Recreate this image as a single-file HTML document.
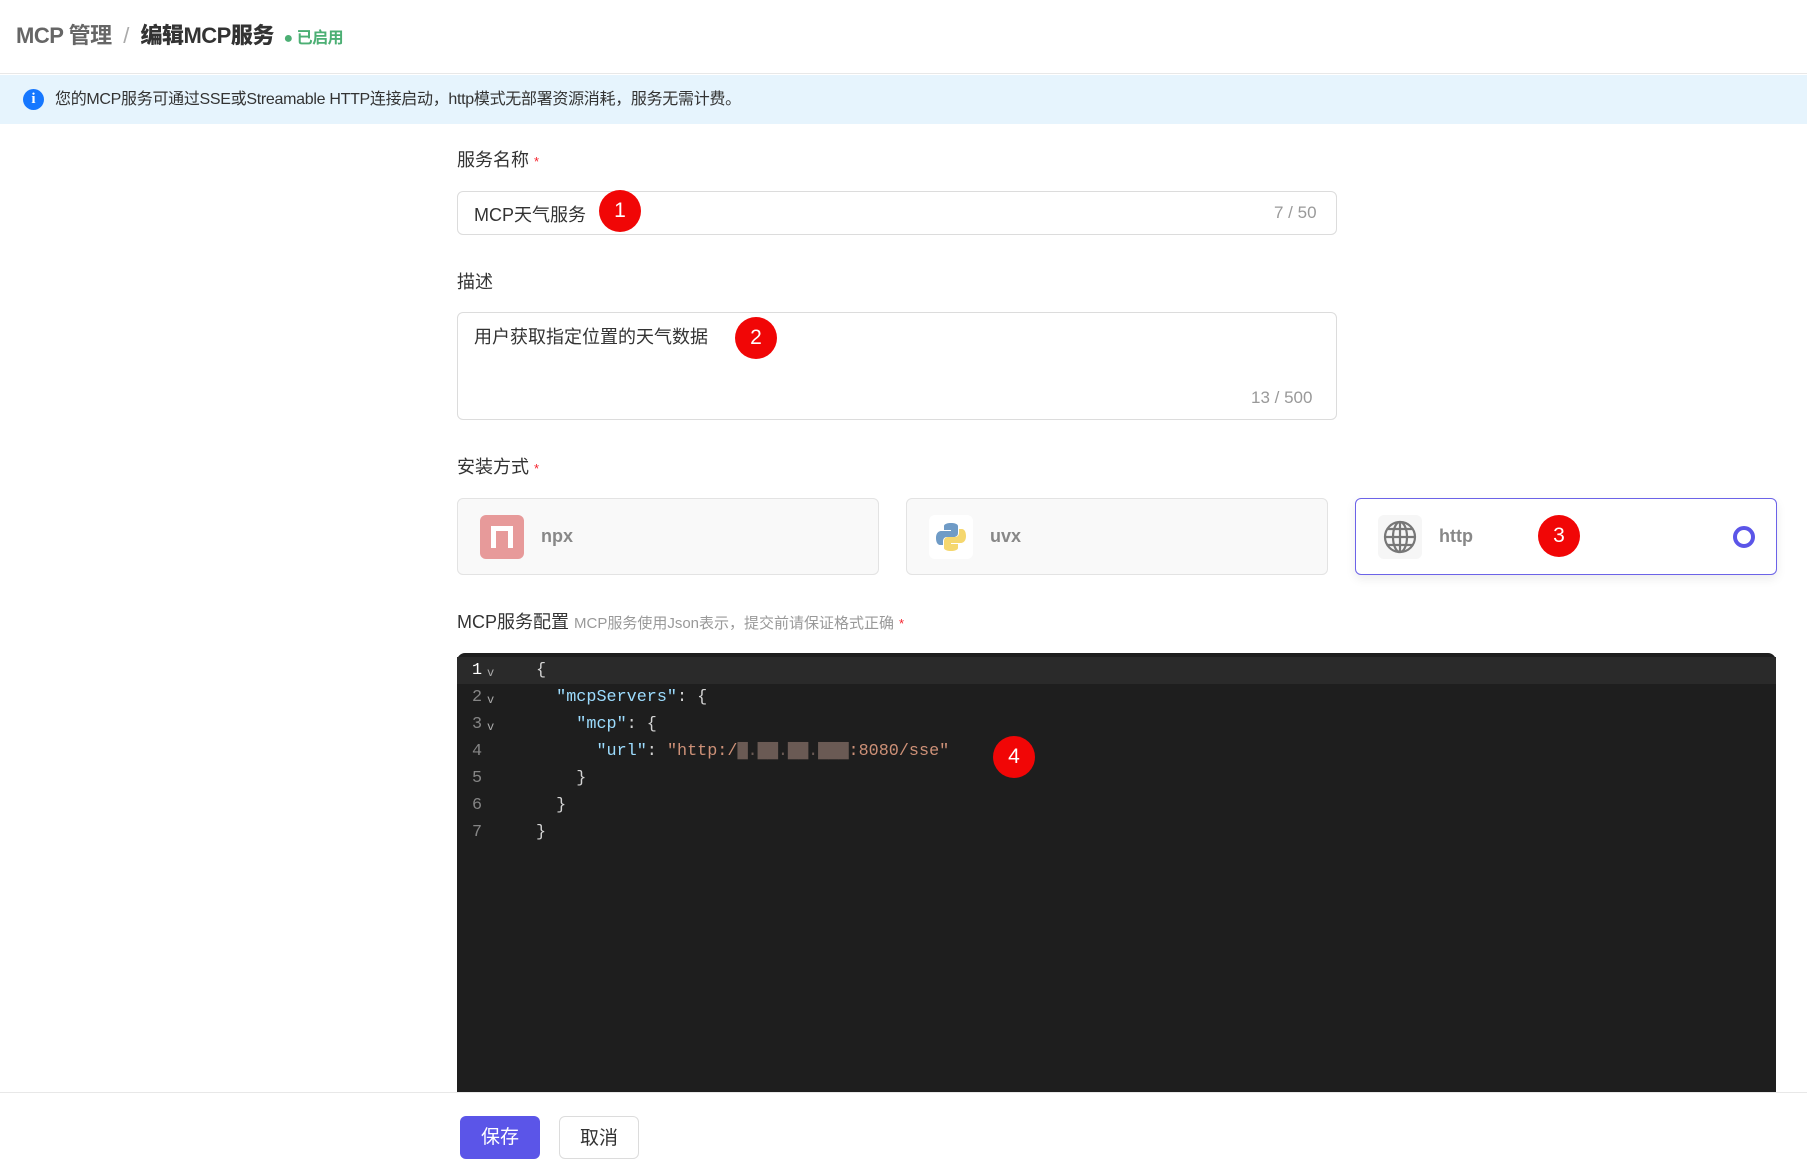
<!DOCTYPE html>
<html><head><meta charset="utf-8"><style>
*{box-sizing:border-box;margin:0;padding:0}
body{width:1807px;height:1173px;background:#fff;font-family:"Liberation Sans","Noto Sans CJK SC",sans-serif;position:relative;overflow:hidden;color:#333}
.abs{position:absolute}
.hdr{left:0;top:0;width:1807px;height:74px;border-bottom:1px solid #e8e8e8}
.title{left:16px;top:18px;font-size:22px;color:#666;font-weight:bold;white-space:nowrap;letter-spacing:-0.5px}
.title b{color:#333}
.info{left:0;top:75px;width:1807px;height:49px;background:#e6f4fd;font-size:16px;color:#333;line-height:49px;padding-left:55px;letter-spacing:-0.3px}
.ic{left:23px;top:89px;width:21px;height:21px;border-radius:50%;background:#1677ff;color:#fff;font-size:15px;font-weight:bold;text-align:center;line-height:21px;font-family:"Liberation Serif",serif}
.lbl{font-size:18px;color:#333;left:457px}
.req{color:#f5222d;font-size:13px;margin-left:5px}
.inp{border:1px solid #dcdcdc;border-radius:6px;left:457px;width:880px;background:#fff}
.cnt{color:#999;font-size:17px}
.badge{width:42px;height:42px;border-radius:50%;background:#f10606;color:#fff;font-size:21px;text-align:center;line-height:42px}
.card{top:498px;width:422px;height:77px;border:1px solid #e3e3e3;border-radius:6px;background:#f9f9f9}
.card .t{position:absolute;left:83px;top:27px;font-size:18px;color:#888;font-weight:bold}
.card .icb{position:absolute;left:22px;top:16px;width:44px;height:44px;border-radius:6px;background:#fff}
.ed{left:457px;top:653px;width:1319px;height:440px;background:#1e1e1e;border-radius:8px 8px 0 0;font-family:"Liberation Mono",monospace;font-size:16.8px}
.ln{position:absolute;left:0;width:1319px;height:27px;line-height:27px;color:#d4d4d4;white-space:pre}
.ln .n{position:absolute;left:15px;color:#858585}
.ln .f{position:absolute;left:30px;top:3px;font-size:12px;color:#aaa}
.ln .c{position:absolute;left:79px}
.k{color:#9cdcfe}.s{color:#ce9178}
.foot{left:0;top:1092px;width:1807px;height:1px;background:#e8e8e8}
.btn{top:1116px;height:43px;border-radius:6px;font-size:19px;text-align:center;line-height:43px}
</style></head><body>
<div class="abs hdr"></div>
<div class="abs title">MCP 管理 <span style="color:#aaa;font-weight:normal;margin:0 6px">/</span> <b>编辑MCP服务</b> <span style="color:#4caf74;font-size:16px;margin-left:4px">● 已启用</span></div>
<div class="abs info">您的MCP服务可通过SSE或Streamable HTTP连接启动，http模式无部署资源消耗，服务无需计费。</div>
<div class="abs ic">i</div>

<div class="abs lbl" style="top:146px">服务名称<span class="req">*</span></div>
<div class="abs inp" style="top:191px;height:44px"></div>
<div class="abs" style="left:474px;top:201px;font-size:18px">MCP天气服务</div>
<div class="abs cnt" style="left:1274px;top:203px">7 / 50</div>
<div class="abs badge" style="left:599px;top:190px">1</div>

<div class="abs lbl" style="top:268px">描述</div>
<div class="abs inp" style="top:312px;height:108px"></div>
<div class="abs" style="left:474px;top:323px;font-size:18px">用户获取指定位置的天气数据</div>
<div class="abs cnt" style="left:1251px;top:388px">13 / 500</div>
<div class="abs badge" style="left:735px;top:317px">2</div>

<div class="abs lbl" style="top:453px">安装方式<span class="req">*</span></div>
<div class="abs card" style="left:457px"><div class="icb" style="background:#e79a9a"><div style="position:absolute;left:11px;top:11px;width:22px;height:22px;border:5px solid #fff;border-bottom:none"></div><div style="position:absolute;left:20px;top:16px;width:5px;height:17px;background:#e79a9a"></div></div><div class="t">npx</div></div>
<div class="abs card" style="left:906px"><div class="icb"><svg width="44" height="44" viewBox="0 0 44 44"><path d="M22 8c-7 0-7 3-7 3v4h7v1H12s-5 0-5 7 4 7 4 7h3v-4s0-4 4-4h7s4 0 4-4v-7s0-3-7-3z" fill="#6f9bc6"/><path d="M22 36c7 0 7-3 7-3v-4h-7v-1h10s5 0 5-7-4-7-4-7h-3v4s0 4-4 4h-7s-4 0-4 4v7s0 3 7 3z" fill="#f5d76e"/></svg></div><div class="t">uvx</div></div>
<div class="abs card" style="left:1355px;background:#fff;border-color:#6c63e8;box-shadow:0 4px 10px rgba(0,0,0,.08)"><div class="icb" style="background:#f6f6f6"><svg width="44" height="44" viewBox="0 0 44 44" fill="none" stroke="#777" stroke-width="2.2"><circle cx="22" cy="22" r="15"/><ellipse cx="22" cy="22" rx="7" ry="15"/><path d="M22 7v30M7 22h30M9 14h26M9 30h26"/></svg></div><div class="t">http</div>
<div style="position:absolute;left:377px;top:27px;width:22px;height:22px;border-radius:50%;border:4px solid #5b55e8;background:#fff"></div></div>
<div class="abs badge" style="left:1538px;top:515px">3</div>

<div class="abs" style="left:457px;top:608px;font-size:18px;white-space:nowrap">MCP服务配置 <span style="font-size:15px;color:#999">MCP服务使用Json表示，提交前请保证格式正确</span><span class="req">*</span></div>

<div class="abs ed">
<div class="ln" style="top:4px;background:#2a2a2a"><span class="n" style="color:#fff">1</span><span class="f">v</span><span class="c">{</span></div>
<div class="ln" style="top:31px"><span class="n">2</span><span class="f">v</span><span class="c">  <span class="k">"mcpServers"</span>: {</span></div>
<div class="ln" style="top:58px"><span class="n">3</span><span class="f">v</span><span class="c">    <span class="k">"mcp"</span>: {</span></div>
<div class="ln" style="top:85px"><span class="n">4</span><span class="c">      <span class="k">"url"</span>: <span class="s">"http:/<span style="color:#6a5a54">▇.▇▇.▇▇.▇▇▇</span>:8080/sse"</span></span></div>
<div class="ln" style="top:112px"><span class="n">5</span><span class="c">    }</span></div>
<div class="ln" style="top:139px"><span class="n">6</span><span class="c">  }</span></div>
<div class="ln" style="top:166px"><span class="n">7</span><span class="c">}</span></div>
</div>
<div class="abs badge" style="left:993px;top:736px">4</div>

<div class="abs foot"></div>
<div class="abs btn" style="left:460px;width:80px;background:#5b55e8;color:#fff">保存</div>
<div class="abs btn" style="left:559px;width:80px;border:1px solid #dcdcdc;color:#333">取消</div>
</body></html>
